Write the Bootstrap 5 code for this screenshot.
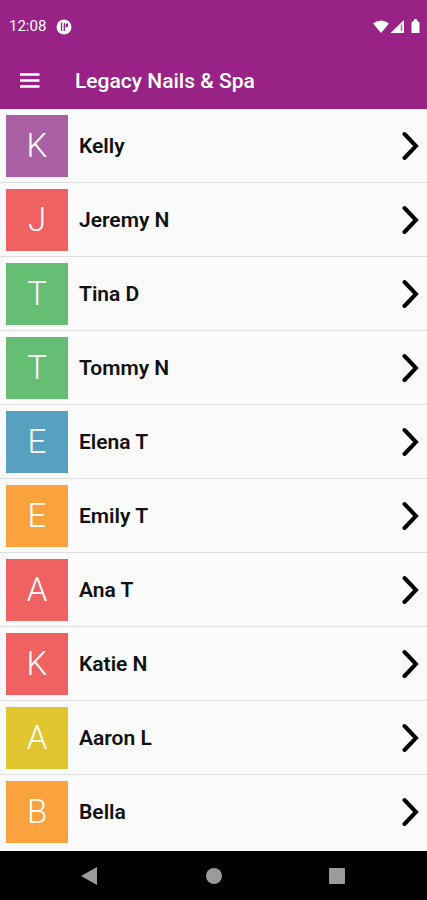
<!DOCTYPE html>
<html lang="en">
<head>
<meta charset="utf-8">
<meta name="viewport" content="width=device-width, initial-scale=1">
<title>Legacy Nails &amp; Spa</title>
<link href="https://cdn.jsdelivr.net/npm/bootstrap@5.3.0/dist/css/bootstrap.min.css" rel="stylesheet">
<style>
body { font-family: Roboto, "Liberation Sans", sans-serif; background: #fafafa; color: #111; }
svg { display: block; }
.app-head { background: #992286; color: #fff; }
.status-row { height: 53px; padding: 0 7px 0 9px; font-size: 15px; }
.app-bar { height: 56px; padding: 0 20px; gap: 35px; }
.app-title { font-size: 21px; line-height: 28px; font-weight: 500; }
.plain-btn { background: none; border: 0; padding: 0; color: inherit; }
.staff-list { padding-bottom: 2px; }
.staff-item { padding: 6px 7px 5px 6px; gap: 11px; color: #111; background: #fafafa; border-bottom: 1px solid #dedede; }
.initial { width: 62px; height: 62px; font-size: 33px; font-weight: 300; color: #fff; }
.staff-name { font-size: 21px; line-height: 28px; font-weight: 600; }
.violet { background: #aa60a5; }
.coral { background: #f06262; }
.green { background: #66bd74; }
.blue { background: #58a0bf; }
.orange { background: #f9a23e; }
.yellow { background: #e1c62f; }
.sys-nav { height: 49px; padding: 0 28px; background: #000; color: #9b9b9b; }
</style>
<script src="https://cdn.jsdelivr.net/npm/bootstrap@5.3.0/dist/js/bootstrap.bundle.min.js"></script>
</head>
<body class="d-flex flex-column min-vh-100">
<header class="app-head">
  <div class="status-row d-flex align-items-center justify-content-between">
    <div class="d-flex align-items-center gap-2">
      <span>12:08</span>
      <svg width="20" height="16" viewBox="0 0 20 16" aria-hidden="true"><circle cx="10" cy="8" r="7.500" fill="#fff"/><path d="M7.500 3.500V12M10.300 4v8" fill="none" stroke="#992286" stroke-width="1.300"/><path d="M11.500 4.500h2.500v3.500h-2.500z" fill="#992286"/></svg>
    </div>
    <svg width="48" height="16" viewBox="0 0 48 16" fill="#fff" aria-hidden="true"><path d="M1 4.500Q9 -1.500 17 4.500L9 14Z"/><path d="M32 1V14H18.500Z"/><path d="M29.500 5.500V12" stroke="#992286" stroke-width="1.500" opacity=".7"/><path d="M42 0h3v1.500l2.500 2V14h-8V3.500l2.500-2z"/></svg>
  </div>
  <nav class="app-bar d-flex align-items-center" aria-label="Main">
    <button class="plain-btn" type="button" aria-label="Open menu">
      <svg width="20" height="16" viewBox="0 0 20 16" aria-hidden="true"><path d="M0 1.500h19.500M0 7.500h19.500M0 13.500h19.500" stroke="#fff" stroke-width="2.500"/></svg>
    </button>
    <h1 class="app-title mb-0">Legacy Nails &amp; Spa</h1>
  </nav>
</header>
<main class="staff-list flex-grow-1">
  <a href="#kelly" class="staff-item d-flex align-items-center text-decoration-none"><span class="initial violet d-flex align-items-center justify-content-center">K</span><span class="staff-name flex-grow-1">Kelly</span><svg width="18" height="30" viewBox="0 0 18 30" aria-hidden="true"><path d="M2.500 3L14 15L2.500 27" fill="none" stroke="#000" stroke-width="4" stroke-linecap="round"/></svg></a>
  <a href="#jeremy" class="staff-item d-flex align-items-center text-decoration-none"><span class="initial coral d-flex align-items-center justify-content-center">J</span><span class="staff-name flex-grow-1">Jeremy N</span><svg width="18" height="30" viewBox="0 0 18 30" aria-hidden="true"><path d="M2.500 3L14 15L2.500 27" fill="none" stroke="#000" stroke-width="4" stroke-linecap="round"/></svg></a>
  <a href="#tina" class="staff-item d-flex align-items-center text-decoration-none"><span class="initial green d-flex align-items-center justify-content-center">T</span><span class="staff-name flex-grow-1">Tina D</span><svg width="18" height="30" viewBox="0 0 18 30" aria-hidden="true"><path d="M2.500 3L14 15L2.500 27" fill="none" stroke="#000" stroke-width="4" stroke-linecap="round"/></svg></a>
  <a href="#tommy" class="staff-item d-flex align-items-center text-decoration-none"><span class="initial green d-flex align-items-center justify-content-center">T</span><span class="staff-name flex-grow-1">Tommy N</span><svg width="18" height="30" viewBox="0 0 18 30" aria-hidden="true"><path d="M2.500 3L14 15L2.500 27" fill="none" stroke="#000" stroke-width="4" stroke-linecap="round"/></svg></a>
  <a href="#elena" class="staff-item d-flex align-items-center text-decoration-none"><span class="initial blue d-flex align-items-center justify-content-center">E</span><span class="staff-name flex-grow-1">Elena T</span><svg width="18" height="30" viewBox="0 0 18 30" aria-hidden="true"><path d="M2.500 3L14 15L2.500 27" fill="none" stroke="#000" stroke-width="4" stroke-linecap="round"/></svg></a>
  <a href="#emily" class="staff-item d-flex align-items-center text-decoration-none"><span class="initial orange d-flex align-items-center justify-content-center">E</span><span class="staff-name flex-grow-1">Emily T</span><svg width="18" height="30" viewBox="0 0 18 30" aria-hidden="true"><path d="M2.500 3L14 15L2.500 27" fill="none" stroke="#000" stroke-width="4" stroke-linecap="round"/></svg></a>
  <a href="#ana" class="staff-item d-flex align-items-center text-decoration-none"><span class="initial coral d-flex align-items-center justify-content-center">A</span><span class="staff-name flex-grow-1">Ana T</span><svg width="18" height="30" viewBox="0 0 18 30" aria-hidden="true"><path d="M2.500 3L14 15L2.500 27" fill="none" stroke="#000" stroke-width="4" stroke-linecap="round"/></svg></a>
  <a href="#katie" class="staff-item d-flex align-items-center text-decoration-none"><span class="initial coral d-flex align-items-center justify-content-center">K</span><span class="staff-name flex-grow-1">Katie N</span><svg width="18" height="30" viewBox="0 0 18 30" aria-hidden="true"><path d="M2.500 3L14 15L2.500 27" fill="none" stroke="#000" stroke-width="4" stroke-linecap="round"/></svg></a>
  <a href="#aaron" class="staff-item d-flex align-items-center text-decoration-none"><span class="initial yellow d-flex align-items-center justify-content-center">A</span><span class="staff-name flex-grow-1">Aaron L</span><svg width="18" height="30" viewBox="0 0 18 30" aria-hidden="true"><path d="M2.500 3L14 15L2.500 27" fill="none" stroke="#000" stroke-width="4" stroke-linecap="round"/></svg></a>
  <a href="#bella" class="staff-item border-0 d-flex align-items-center text-decoration-none"><span class="initial orange d-flex align-items-center justify-content-center">B</span><span class="staff-name flex-grow-1">Bella</span><svg width="18" height="30" viewBox="0 0 18 30" aria-hidden="true"><path d="M2.500 3L14 15L2.500 27" fill="none" stroke="#000" stroke-width="4" stroke-linecap="round"/></svg></a>
</main>
<nav class="sys-nav d-flex justify-content-around align-items-center" aria-label="System">
  <button class="plain-btn" type="button" aria-label="Back"><svg width="18" height="18" viewBox="0 0 18 18" fill="currentColor" aria-hidden="true"><path d="M16 0v18L0 9z"/></svg></button>
  <button class="plain-btn" type="button" aria-label="Home"><svg width="18" height="18" viewBox="0 0 18 18" fill="currentColor" aria-hidden="true"><circle cx="10" cy="9" r="8"/></svg></button>
  <button class="plain-btn" type="button" aria-label="Recent apps"><svg width="18" height="18" viewBox="0 0 18 18" fill="currentColor" aria-hidden="true"><rect x="1" y="1" width="16" height="16" rx="1"/></svg></button>
</nav>
</body>
</html>
